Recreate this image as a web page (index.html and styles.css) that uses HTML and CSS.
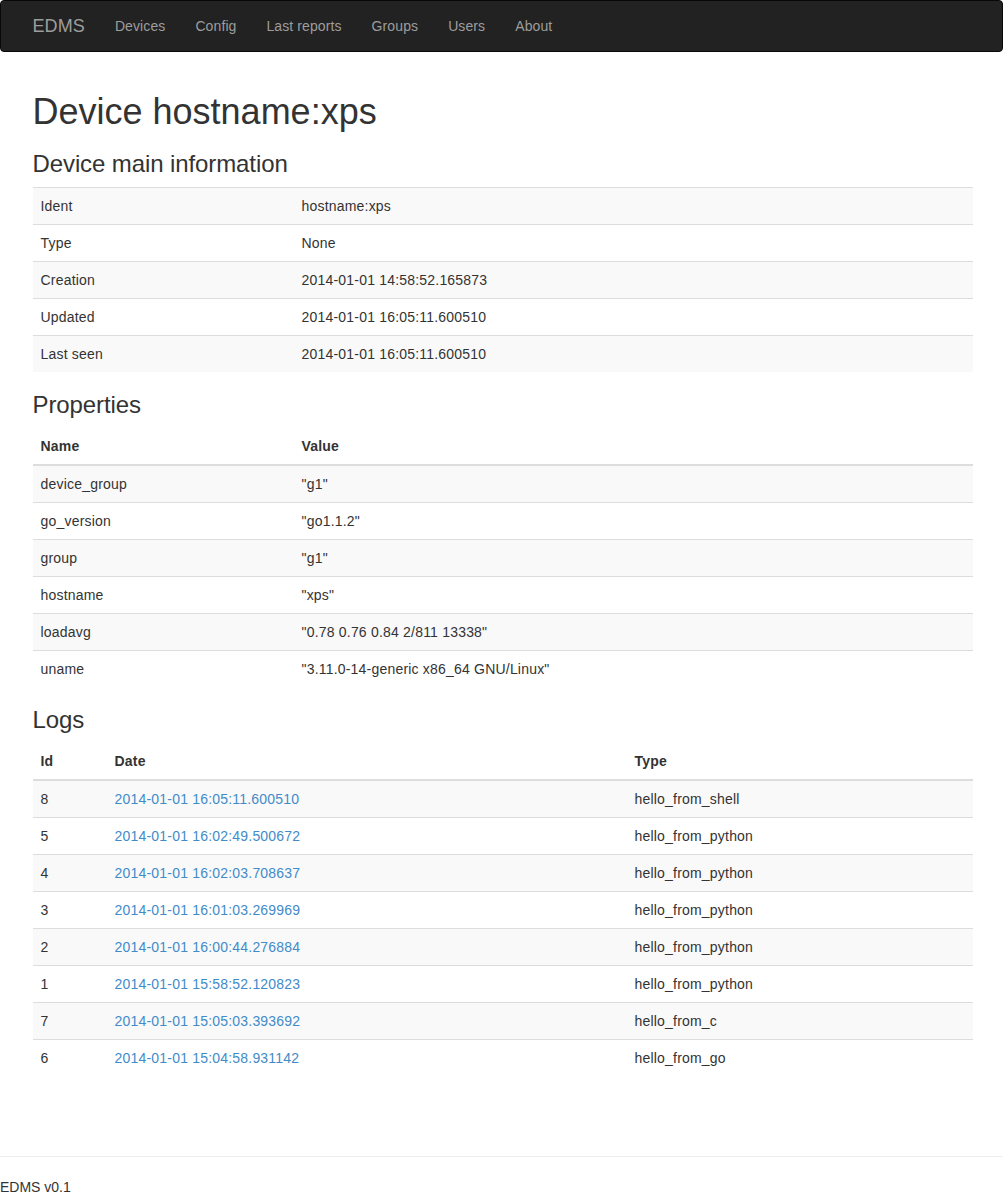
FILE: index.html
```html
<!DOCTYPE html>
<html lang="en">
<head>
<meta charset="utf-8">
<title>EDMS - Device hostname:xps</title>
<link rel="stylesheet" href="styles.css">
</head>
<body>
<nav class="navbar">
  <div class="container nav-inner">
    <a class="brand" href="#">EDMS</a>
    <ul class="nav">
      <li><a href="#">Devices</a></li>
      <li><a href="#">Config</a></li>
      <li><a href="#">Last reports</a></li>
      <li><a href="#">Groups</a></li>
      <li><a href="#">Users</a></li>
      <li><a href="#">About</a></li>
    </ul>
  </div>
</nav>

<div class="container main">
  <h1>Device hostname:xps</h1>

  <h3>Device main information</h3>
  <table class="table striped">
    <colgroup><col class="c-key"><col></colgroup>
    <tbody>
      <tr><td>Ident</td><td>hostname:xps</td></tr>
      <tr><td>Type</td><td>None</td></tr>
      <tr><td>Creation</td><td>2014-01-01 14:58:52.165873</td></tr>
      <tr><td>Updated</td><td>2014-01-01 16:05:11.600510</td></tr>
      <tr><td>Last seen</td><td>2014-01-01 16:05:11.600510</td></tr>
    </tbody>
  </table>

  <h3>Properties</h3>
  <table class="table striped">
    <colgroup><col class="c-key"><col></colgroup>
    <thead>
      <tr><th>Name</th><th>Value</th></tr>
    </thead>
    <tbody>
      <tr><td>device_group</td><td>"g1"</td></tr>
      <tr><td>go_version</td><td>"go1.1.2"</td></tr>
      <tr><td>group</td><td>"g1"</td></tr>
      <tr><td>hostname</td><td>"xps"</td></tr>
      <tr><td>loadavg</td><td>"0.78 0.76 0.84 2/811 13338"</td></tr>
      <tr><td>uname</td><td>"3.11.0-14-generic x86_64 GNU/Linux"</td></tr>
    </tbody>
  </table>

  <h3>Logs</h3>
  <table class="table striped">
    <colgroup><col class="c-id"><col class="c-date"><col></colgroup>
    <thead>
      <tr><th>Id</th><th>Date</th><th>Type</th></tr>
    </thead>
    <tbody>
      <tr><td>8</td><td><a href="#">2014-01-01 16:05:11.600510</a></td><td>hello_from_shell</td></tr>
      <tr><td>5</td><td><a href="#">2014-01-01 16:02:49.500672</a></td><td>hello_from_python</td></tr>
      <tr><td>4</td><td><a href="#">2014-01-01 16:02:03.708637</a></td><td>hello_from_python</td></tr>
      <tr><td>3</td><td><a href="#">2014-01-01 16:01:03.269969</a></td><td>hello_from_python</td></tr>
      <tr><td>2</td><td><a href="#">2014-01-01 16:00:44.276884</a></td><td>hello_from_python</td></tr>
      <tr><td>1</td><td><a href="#">2014-01-01 15:58:52.120823</a></td><td>hello_from_python</td></tr>
      <tr><td>7</td><td><a href="#">2014-01-01 15:05:03.393692</a></td><td>hello_from_c</td></tr>
      <tr><td>6</td><td><a href="#">2014-01-01 15:04:58.931142</a></td><td>hello_from_go</td></tr>
    </tbody>
  </table>
</div>

<footer class="footer">
  <hr class="footer-rule">
  <p class="footer-text">EDMS v0.1</p>
</footer>
</body>
</html>
```

FILE: styles.css
```css
* {
  box-sizing: border-box;
}

html {
  overflow-y: hidden;
}

body {
  margin: 0;
  font-family: "Liberation Sans", Arial, Helvetica, sans-serif;
  font-size: 14px;
  line-height: 20px;
  letter-spacing: 0.2px;
  color: #333333;
  background: #ffffff;
}

a {
  color: #428bca;
  text-decoration: none;
}

.container {
  width: 970px;
  margin: 0 auto;
  padding: 0 14px 0 16px;
}

/* Navbar */
.navbar {
  background: #222222;
  border: 1px solid #080808;
  border-radius: 4px;
  min-height: 50px;
  margin-bottom: 20px;
}

.nav-inner {
  display: flex;
  align-items: stretch;
}

.brand {
  display: block;
  margin-left: -15px;
  padding: 15px;
  height: 50px;
  font-size: 18px;
  line-height: 20px;
  letter-spacing: 0.1px;
  color: #9d9d9d;
}

.nav {
  display: flex;
  list-style: none;
  margin: 0;
  padding: 0;
}

.nav a {
  display: block;
  padding: 15px;
  line-height: 20px;
  letter-spacing: 0.1px;
  color: #9d9d9d;
}

/* Main */
.main {
  display: flow-root;
  padding-bottom: 40px;
}

h1, h3 {
  font-family: inherit;
  font-weight: 500;
  color: inherit;
  margin-top: 20px;
  margin-bottom: 10px;
}

h1 {
  font-size: 36px;
  line-height: 39px;
  letter-spacing: 0;
}

h3 {
  font-size: 24px;
  line-height: 26px;
  letter-spacing: -0.1px;
}

/* Tables */
.table {
  width: 100%;
  margin-bottom: 20px;
  border-collapse: collapse;
  border-spacing: 0;
}

.table th,
.table td {
  padding: 8px;
  line-height: 20px;
  text-align: left;
  vertical-align: top;
  border-top: 1px solid #dddddd;
}

.table th {
  font-weight: bold;
  vertical-align: bottom;
  border-top: 0;
  border-bottom: 2px solid #dddddd;
}

.table thead + tbody tr:first-child td {
  border-top: 0;
}

.striped tbody tr:nth-child(odd) td {
  background: #f9f9f9;
}

.c-key {
  width: 261px;
}

.c-id {
  width: 74px;
}

.c-date {
  width: 520px;
}

/* Footer */
.footer-rule {
  margin: 20px 0;
  border: 0;
  border-top: 1px solid #eeeeee;
  height: 0;
}

.footer-text {
  margin: 0;
  letter-spacing: 0;
}
```
